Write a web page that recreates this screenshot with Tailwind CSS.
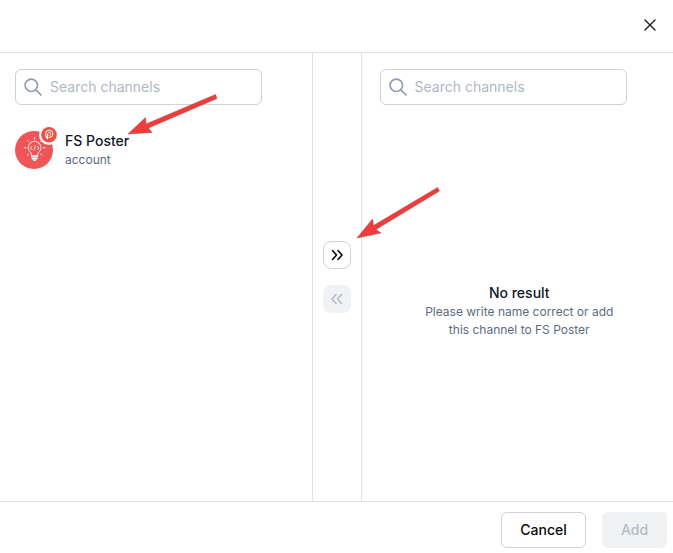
<!DOCTYPE html>
<html lang="en">
<head>
    <meta charset="UTF-8">
    <meta name="viewport" content="width=device-width, initial-scale=1.0">
    <title>Add channels</title>
    <script src="https://cdn.jsdelivr.net/npm/@tailwindcss/browser@4"></script>
</head>
<body class="bg-white font-['Inter',sans-serif] text-[#0f172a]">
    <div class="relative flex flex-col min-h-screen">
        <!-- Header -->
        <header class="flex items-center justify-end h-[53px] pr-[15px] pb-0.5 border-b border-[#dfe1e6]">
            <button type="button" aria-label="Close" class="flex items-center justify-center size-4">
                <svg width="16" height="16" viewBox="0 0 16 16" fill="none" stroke="#1c1c22" stroke-width="1.4" stroke-linecap="round">
                    <path d="M3 3 13 13M13 3 3 13"></path>
                </svg>
            </button>
        </header>

        <!-- Channel lists -->
        <main class="grid flex-1 grid-cols-[minmax(0,1fr)_50px_minmax(0,1fr)]">
            <section class="flex flex-col pt-4 pl-[15px] pr-[50px]">
                <label class="flex items-center gap-2 h-9 px-2 border border-[#cbd2dc] rounded-md">
                    <svg class="shrink-0" width="18" height="18" viewBox="0 0 18 18" fill="none" stroke="#8f9db3" stroke-width="1.6" stroke-linecap="round">
                        <circle cx="7.3" cy="7.3" r="6.2"></circle>
                        <path d="m11.9 11.9 5 5"></path>
                    </svg>
                    <input type="text" aria-label="Search your channels" placeholder="Search channels" class="w-full min-w-0 text-sm outline-none placeholder:text-[#b0b8c3]">
                </label>

                <button type="button" class="flex items-center gap-3 mt-[26px] text-left">
                    <span class="relative size-[38px] shrink-0">
                        <svg width="38" height="38" viewBox="0 0 38 38" fill="none" stroke="#fff" stroke-linecap="round" stroke-linejoin="round">
                            <circle cx="19" cy="19" r="19" fill="#ef5557" stroke="none"></circle>
                            <path stroke-width=".9" d="M16.4 24.3v-1.5c0-1.2-3.2-2.6-3.2-6.1a6.4 6.4 0 0 1 12.8 0c0 3.5-3.2 4.9-3.2 6.1v1.5Z"></path>
                            <path stroke-width="1.4" d="M16.6 25.8h6M17.2 27.7h4.8M18.8 29.4h1.6"></path>
                            <path stroke-width=".8" d="m17 15.2-1.7 1.7 1.7 1.7M22.2 15.2l1.7 1.7-1.7 1.7M20.3 14.8l-1.3 4.2"></path>
                            <path stroke-width=".9" d="M19.6 6.5v1.7M12.4 9.4l1.2 1.2M26.8 9.4l-1.2 1.2M9.2 16.8h1.7M28.3 16.8H30M12.4 24.2l1.2-1.2M26.8 24.2l-1.2-1.2"></path>
                        </svg>
                        <svg class="absolute -top-1.5 -right-1.5" width="20" height="20" viewBox="0 0 20 20" fill="none">
                            <circle cx="10" cy="10" r="10" fill="#fff"></circle>
                            <circle cx="10" cy="9.8" r="7.8" fill="#ee5043"></circle>
                            <path d="M8.6 9.6v4.2c-1.4-1.3-2-3-2-4.8a3.6 3.6 0 1 1 3.8 3.4" stroke="#fff" stroke-width="1.1" stroke-linecap="round" stroke-linejoin="round"></path>
                            <path d="M8.6 9.8V8.9a1.6 1.6 0 1 1 1.7 1.6" stroke="#fff" stroke-width=".8" stroke-linecap="round"></path>
                        </svg>
                    </span>
                    <span class="flex flex-col">
                        <span class="text-sm font-medium">FS Poster</span>
                        <span class="text-xs leading-[18px] text-[#5d6b80]">account</span>
                    </span>
                </button>
            </section>

            <div class="flex flex-col items-center justify-center gap-4 border-x border-[#dfe1e6]">
                <button type="button" aria-label="Add selected" class="flex items-center justify-center size-7 border border-[#cbd2dc] rounded-lg">
                    <svg width="14" height="14" viewBox="0 0 14 14" fill="none" stroke="#09090b" stroke-width="1.6" stroke-linecap="round" stroke-linejoin="round">
                        <path d="m2.5 2.5 4 4.5-4 4.5M8 2.5 12 7l-4 4.5"></path>
                    </svg>
                </button>
                <button type="button" aria-label="Remove selected" disabled class="flex items-center justify-center size-7 bg-[#f1f2f4] rounded-lg">
                    <svg width="14" height="14" viewBox="0 0 14 14" fill="none" stroke="#b3bbc5" stroke-width="1.5" stroke-linecap="round" stroke-linejoin="round">
                        <path d="M6 2.5 2 7l4 4.5M11.5 2.5l-4 4.5 4 4.5"></path>
                    </svg>
                </button>
            </div>

            <section class="flex flex-col pt-4 pl-[18px] pr-[14px]">
                <label class="flex items-center gap-2 h-9 px-2 mr-8 border border-[#cbd2dc] rounded-md">
                    <svg class="shrink-0" width="18" height="18" viewBox="0 0 18 18" fill="none" stroke="#8f9db3" stroke-width="1.6" stroke-linecap="round">
                        <circle cx="7.3" cy="7.3" r="6.2"></circle>
                        <path d="m11.9 11.9 5 5"></path>
                    </svg>
                    <input type="text" aria-label="Search added channels" placeholder="Search channels" class="w-full min-w-0 text-sm outline-none placeholder:text-[#b0b8c3]">
                </label>

                <div class="flex flex-1 flex-col items-center justify-center mt-4 text-center">
                    <h2 class="text-sm font-medium">No result</h2>
                    <p class="max-w-[200px] text-xs leading-[18px] text-[#5d6b80]">Please write name correct or add this channel to FS Poster</p>
                </div>
            </section>
        </main>

        <!-- Footer -->
        <footer class="flex justify-end gap-4 pt-2.5 pb-[5px] pr-1.5 border-t border-[#dfe1e6]">
            <button type="button" class="h-9 w-[85px] border border-[#cbd2dc] rounded-md text-sm font-medium text-[#09090b]">Cancel</button>
            <button type="button" disabled class="h-9 w-[65px] bg-[#f1f2f4] rounded-md text-sm font-medium text-[#b3bbc5]">Add</button>
        </footer>

        <!-- Guide arrows -->
        <svg class="absolute top-[90px] left-[125px] pointer-events-none" width="96" height="48" viewBox="125 90 96 48">
            <path d="M128 134 145.5 117.5 146 124 215.5 94.5 217 98.5 148.5 128 152 132.5Z" fill="#f23b3b" stroke="#9a4a4a" stroke-width=".5"></path>
        </svg>
        <svg class="absolute top-[185px] left-[354px] pointer-events-none" width="90" height="57" viewBox="354 185 90 57">
            <path d="M357 238 372.5 219 373.5 225.5 437.5 187.5 439.5 191 376 229.5 381 233Z" fill="#f23b3b" stroke="#9a4a4a" stroke-width=".5"></path>
        </svg>
    </div>
</body>
</html>
